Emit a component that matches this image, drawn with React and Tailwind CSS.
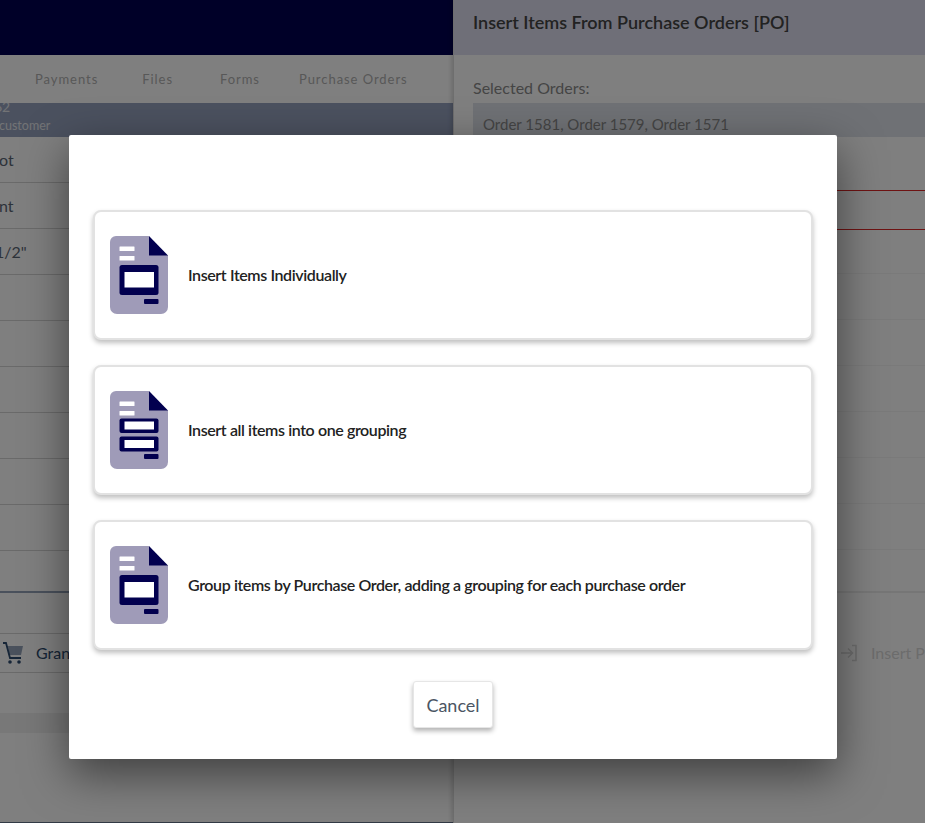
function DocIcon({ grouped }) {
  return (
    <svg width="58" height="78" viewBox="0 0 58 78" className="shrink-0">
      <path d="M6 0H39V19H58V71a7 7 0 0 1-7 7H7a7 7 0 0 1-7-7V6A6 6 0 0 1 6 0Z" fill="#9f9bb8" />
      <path d="M39 0L58 19.500H39Z" fill="#02004f" />
      <rect x="9.500" y="10.500" width="15" height="4.500" rx="0.5" fill="#fff" />
      <rect x="9.500" y="20" width="15" height="4.500" rx="0.500" fill="#fff" />
      {grouped ? (
        <g>
          <rect x="9.500" y="27.500" width="39" height="14.500" rx="2" fill="#02004f" />
          <rect x="14.500" y="30.500" width="29.500" height="8" fill="#fff" />
          <rect x="9.500" y="45.500" width="39" height="15" rx="2" fill="#02004f" />
          <rect x="14.500" y="49" width="29.500" height="8" fill="#fff" />
        </g>
      ) : (
        <g>
          <rect x="9.500" y="29" width="39" height="30" rx="2.500" fill="#02004f" />
          <rect x="14.500" y="36" width="29.500" height="15.500" fill="#fff" />
        </g>
      )}
      <rect x="34" y="63" width="14.500" height="5" rx="1" fill="#02004f" />
    </svg>
  );
}

function Choice({ label, grouped }) {
  return (
    <div className="h-[130px] flex items-center gap-5 rounded-lg bg-white border-2 border-[#e2e2e2] pl-[15px] shadow-[0_3px_5px_rgba(0,0,0,0.25)]">
      <DocIcon grouped={grouped} />
      <span className="text-[16px] font-semibold tracking-[-0.4px] text-[#222]">{label}</span>
    </div>
  );
}

const leftRows = ["ot", "nt", '1/2"', "", "", "", "", "", ""];
const rightRows = ["", "", "", "", "", ""];

export default function App() {
  return (
    <div className="relative h-[823px] w-[925px] overflow-hidden bg-white font-['Lato',sans-serif]">
      <div className="flex h-full">
        <div className="flex w-[453px] shrink-0 flex-col overflow-hidden border-b border-[#64748b]">
          <div className="h-[55px] shrink-0 bg-[#000050]" />
          <div className="flex h-[48px] shrink-0 items-center pt-[1px] text-[13px] tracking-[0.95px] text-[#b0b0b0]">
            <span className="ml-[35px]">Payments</span>
            <span className="ml-[44px]">Files</span>
            <span className="ml-[47px]">Forms</span>
            <span className="ml-[39px]">Purchase Orders</span>
          </div>
          <div className="h-[34px] shrink-0 overflow-hidden bg-[#96a2bf]">
            <div className="-ml-[6px] -mt-[4px] text-[14px] leading-[16px] text-[#e5e7eb]">62</div>
            <div className="-ml-[1px] mt-[3px] text-[12.500px] leading-[16px] text-[#e5e7eb]">customer</div>
          </div>
          <div className="flex flex-col">
            {leftRows.map((t, i) => (
              <div key={i} className="flex h-[46px] items-center border-b border-[#d4d4d4] pt-[1px] text-[16px] text-[#5b6675]">
                <span className={i === 2 ? "-ml-[5px]" : "-ml-[1px]"}>{t}</span>
              </div>
            ))}
          </div>
          <div className="mt-[40px] h-[2px] shrink-0 bg-[#94a3b8]" />
          <div className="mt-[40px] flex h-[40px] shrink-0 items-center border-y border-[#d4d4d4] text-[#2c4a6e]">
            <svg width="24" height="24" viewBox="0 0 24 24" className="ml-[1px] shrink-0">
              <path d="M7 5h15l-2 9H8Z" fill="#94a3b8" />
              <path d="M2 2h3l4 15h11" fill="none" stroke="#2c4a6e" strokeWidth="1.800" />
              <circle cx="9" cy="21" r="1.800" fill="#2c4a6e" />
              <circle cx="18" cy="21" r="1.800" fill="#2c4a6e" />
            </svg>
            <span className="ml-[11px] text-[16px]">Grand Total</span>
          </div>
          <div className="mt-[40px] h-[20px] shrink-0 bg-[#f0f0f0]" />
        </div>
        <div className="flex min-w-0 flex-1 flex-col border-l border-[#ddd] shadow-[-2px_0_4px_rgba(0,0,0,0.15)]">
          <div className="flex h-[55px] shrink-0 items-center bg-[#dedef0] pb-[11px] pl-[19px] text-[18px] font-semibold whitespace-nowrap text-[#444]">
            Insert Items From Purchase Orders [PO]
          </div>
          <div className="pl-[19px] pt-[22px] text-[16px] leading-[22px] text-[#8a8a8a]">Selected Orders:</div>
          <div className="ml-[19px] mt-[4px] h-[34px] shrink-0 bg-[#dfe3ea] pl-[10px] pt-[10px] text-[15px] leading-[22px] text-[#8a8a8a]">
            Order 1581, Order 1579, Order 1571
          </div>
          <div className="mt-[9px] h-[45px] shrink-0 border-b border-[#dc2626]" />
          <div className="h-[39px] shrink-0 border-b border-[#dc2626]" />
          <div className="flex flex-col">
            <div className="h-[44px] shrink-0 border-b border-[#f5f5f5]" />
            {rightRows.map((_, i) => (
              <div key={i} className="h-[46px] shrink-0 border-b border-[#f5f5f5]" />
            ))}
          </div>
          <div className="mt-[41px] h-[2px] shrink-0 bg-[#ececec]" />
          <div className="flex items-center gap-[13px] pl-[386px] pt-[48px] whitespace-nowrap text-[16px] text-[#d8d8d8]">
            <svg width="18" height="18" viewBox="0 0 18 18" fill="none" stroke="#d8d8d8" strokeWidth="1.500" className="shrink-0">
              <path d="M1 9h11M8 4.500 12.500 9 8 13.500M12 1.500h4v15h-4" />
            </svg>
            <span>Insert PO Items</span>
          </div>
        </div>
      </div>

      <div className="absolute inset-0 bg-black/50" />

      <div className="absolute left-[69px] top-[135px] h-[624px] w-[768px] rounded-[2px] bg-white px-[24px] pt-[75px] shadow-[0_15px_45px_rgba(0,0,0,0.5)]">
        <div className="flex flex-col gap-[25px]">
          <Choice label="Insert Items Individually" />
          <Choice label="Insert all items into one grouping" grouped />
          <Choice label="Group items by Purchase Order, adding a grouping for each purchase order" />
        </div>
        <div className="mt-[31px] flex justify-center">
          <button className="h-[47px] w-[80px] rounded-[3px] border border-[#e6e6e6] bg-white pt-[1px] text-[18px] text-[#4b5563] shadow-[0_3px_5px_rgba(0,0,0,0.3)]">Cancel</button>
        </div>
      </div>
    </div>
  );
}
